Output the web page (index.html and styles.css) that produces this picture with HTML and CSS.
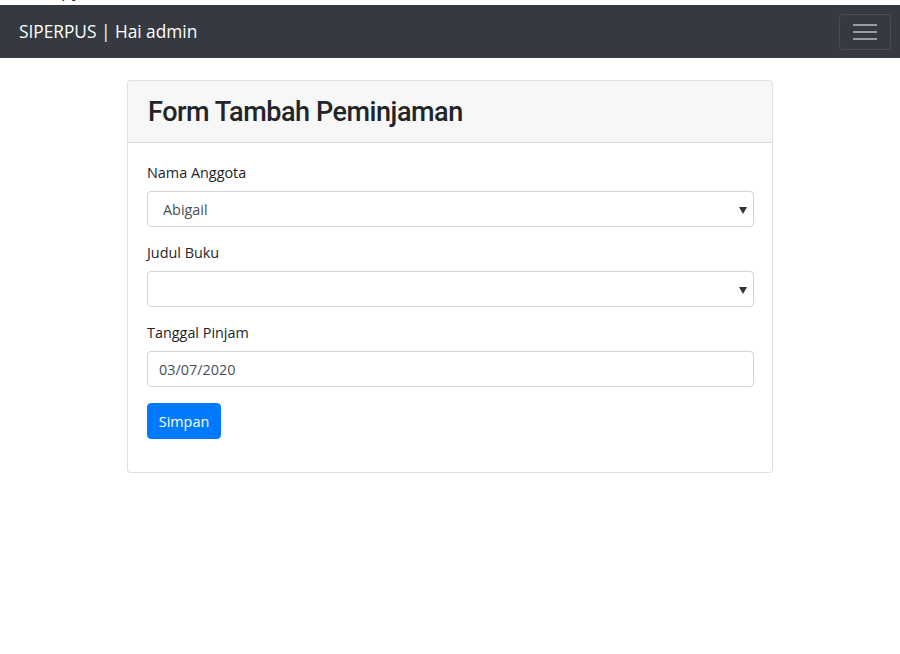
FILE: index.html
```html
<!DOCTYPE html>
<html lang="id">
<head>
<meta charset="utf-8">
<title>SIPERPUS - Form Tambah Peminjaman</title>
<link rel="stylesheet" href="styles.css">
</head>
<body>
<div class="topclip"><span class="topclip-text">py</span></div>
<nav class="navbar">
  <a class="brand" href="#">SIPERPUS | Hai admin</a>
  <button class="toggler" type="button" aria-label="Toggle navigation">
    <svg width="24" height="18" viewBox="0 0 24 18" aria-hidden="true">
      <path d="M0 2h24M0 9h24M0 16h24" stroke="rgba(255,255,255,0.5)" stroke-width="2"/>
    </svg>
  </button>
</nav>
<main class="main">
  <section class="card">
    <header class="card-header">
      <h2 class="card-title">Form Tambah Peminjaman</h2>
    </header>
    <form class="card-body">
      <div class="form-group">
        <label class="label">Nama Anggota</label>
        <div class="select-wrap">
          <select class="control select"><option>Abigail</option></select>
        </div>
      </div>
      <div class="form-group">
        <label class="label">Judul Buku</label>
        <div class="select-wrap">
          <select class="control select"><option></option></select>
        </div>
      </div>
      <div class="form-group tall">
        <label class="label">Tanggal Pinjam</label>
        <input class="control input" type="text" value="03/07/2020">
      </div>
      <div class="form-group last">
        <button class="btn" type="button">Simpan</button>
      </div>
    </form>
  </section>
</main>
</body>
</html>
```
FILE: styles.css
```css
* { box-sizing: border-box; }
html, body { margin: 0; padding: 0; background: #fff; }
body {
  font-family: "Open Sans", "Noto Sans", sans-serif;
  color: #212529;
  font-size: 14.4px;
}
.topclip {
  height: 5px;
  overflow: hidden;
  background: #fff;
}
.topclip-text {
  display: block;
  margin-top: -19px;
  margin-left: 61px;
  font-size: 18px;
  line-height: 18px;
  color: #212529;
}
.navbar {
  height: 53px;
  background: #343a40;
  display: flex;
  align-items: center;
  justify-content: space-between;
  padding: 0 9px 0 19px;
}
.brand {
  color: #fff;
  text-decoration: none;
  font-size: 17.3px;
  line-height: 27px;
}
.toggler {
  width: 52px;
  height: 36px;
  display: flex;
  align-items: center;
  justify-content: center;
  background: transparent;
  border: 1px solid rgba(255,255,255,0.1);
  border-radius: 4px;
  padding: 0;
  margin-top: 1px;
}
.main {
  padding-top: 22px;
}
.card {
  width: 646px;
  margin: 0 auto 0 127px;
  border: 1px solid rgba(0,0,0,0.125);
  border-radius: 4px;
  background: #fff;
}
.card-header {
  height: 62px;
  background: #f7f7f7;
  border-bottom: 1px solid rgba(0,0,0,0.125);
  border-radius: 4px 4px 0 0;
  padding: 0 20px;
  display: flex;
  align-items: center;
}
.card-title {
  margin: 0;
  font-family: Roboto, "Open Sans", sans-serif;
  font-size: 27px;
  font-weight: 500;
  letter-spacing: -0.45px;
  line-height: 34px;
  color: #212529;
}
.card-body {
  margin: 0;
  padding: 19px 18px 15px 19px;
}
.form-group {
  margin-bottom: 15px;
}
.form-group.tall {
  margin-bottom: 16px;
}
.form-group.last {
  margin-bottom: 18px;
}
.label {
  display: block;
  font-size: 14.4px;
  line-height: 22px;
  margin-bottom: 7px;
  color: #212529;
}
.select-wrap {
  position: relative;
}
.select-wrap::after {
  content: "";
  position: absolute;
  right: 7px;
  top: 16px;
  border-left: 4px solid transparent;
  border-right: 4px solid transparent;
  border-top: 7px solid #333;
  pointer-events: none;
}
.control {
  display: block;
  width: 100%;
  height: 36px;
  border: 1px solid #ced4da;
  border-radius: 4px;
  background: #fff;
  font-family: inherit;
  font-size: 14.4px;
  color: #495057;
  margin: 0;
}
.select {
  appearance: none;
  -webkit-appearance: none;
  padding: 0 24px 0 15px;
}
.input {
  padding: 0 11px;
}
.btn {
  display: block;
  height: 36px;
  width: 74px;
  padding: 0;
  background: #007bff;
  border: 1px solid #007bff;
  border-radius: 4px;
  color: #fff;
  font-family: inherit;
  font-size: 14.4px;
  cursor: pointer;
}
```
